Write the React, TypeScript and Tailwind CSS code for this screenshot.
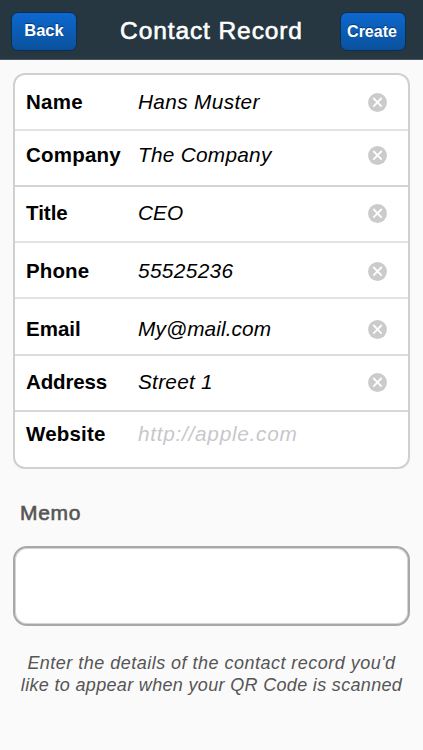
import { useState } from "react";

interface Field {
   label: string;
   value: string;
   placeholder?: string;
   row: string;
   labelStyle: string;
   valueStyle: string;
}

const initialFields: Field[] = [
   { label: "Name", value: "Hans Muster", row: "h-14 pt-[15px] border-[#e2e2e2]", labelStyle: "tracking-[0.3px]", valueStyle: "tracking-[0.35px]" },
   { label: "Company", value: "The Company", row: "h-14 pt-3 border-[#d4d4d4]", labelStyle: "tracking-[0.2px]", valueStyle: "tracking-[0.27px]" },
   { label: "Title", value: "CEO", row: "h-14 pt-[14px] border-[#e2e2e2]", labelStyle: "", valueStyle: "" },
   { label: "Phone", value: "55525236", row: "h-14 pt-4 border-[#e2e2e2]", labelStyle: "tracking-[0.1px]", valueStyle: "tracking-[0.37px]" },
   { label: "Email", value: "My@mail.com", row: "h-[57px] pt-[18px] border-[#dcdcdc]", labelStyle: "", valueStyle: "tracking-[0.1px]" },
   { label: "Address", value: "Street 1", row: "h-14 pt-[14px] border-[#d8d8d8]", labelStyle: "tracking-[-0.15px]", valueStyle: "tracking-[0.25px]" },
   { label: "Website", value: "", placeholder: "http://apple.com", row: "h-[54px] pt-[10px] border-transparent", labelStyle: "tracking-[0.2px]", valueStyle: "tracking-[0.72px]" },
];

function ClearIcon() {
   return (
      <svg width="19" height="19" viewBox="0 0 19 19" className="block">
         <circle cx="9.5" cy="9.5" r="9.4" fill="#cbcbcb" />
         <path d="M5.3 5 L13.7 13.6 M13.7 5 L5.3 13.6" stroke="#fff" strokeWidth="1.8" />
      </svg>
   );
}

function HeaderButton({ children, className }: { children: string; className: string }) {
   return (
      <button className={`h-[39px] w-[66px] shrink-0 rounded-[7px] border border-[#0b2e55] bg-linear-to-b from-[#0d68cf] to-[#0a519c] leading-none font-bold text-white [text-shadow:0_-1px_1px_#073a75] ${className}`}>
         {children}
      </button>
   );
}

export default function App() {
   const [fields, setFields] = useState(initialFields);

   const clearField = (label: string) => {
      setFields((current) => current.map((field) => (field.label === label ? { ...field, value: "" } : field)));
   };

   return (
      <div className="h-[750px] w-[423px] overflow-hidden bg-[#fafafa] font-['Liberation_Sans',Arial,sans-serif]">
         <header className="flex h-[60px] items-start justify-between border-b border-[#4a5860] bg-[#263741] pt-3 pr-[17px] pl-[11px]">
            <HeaderButton className="pb-[2px] text-[16.5px]">Back</HeaderButton>
            <h1 className="mt-[4px] ml-[6px] text-[24.5px] leading-[30px] tracking-[0.9px] whitespace-nowrap text-white [-webkit-text-stroke:0.6px_#fff]">Contact Record</h1>
            <HeaderButton className="pt-px pr-[2px] text-[16px]">Create</HeaderButton>
         </header>

         <main>
            <section className="mx-[13px] mt-[13px] h-[396px] w-[397px] rounded-[12px] border-2 border-[#d0d0d0] bg-white">
               {fields.map((field) => (
                  <div key={field.label} className={`flex items-start border-b-2 pl-[11px] ${field.row}`}>
                     <span className={`w-28 shrink-0 text-[20.5px] leading-6 font-bold text-black ${field.labelStyle}`}>{field.label}</span>
                     <span className={`grow text-[20.8px] leading-6 italic whitespace-nowrap ${field.value ? "text-black" : "text-[#c7c7cc]"} ${field.valueStyle}`}>
                        {field.value || field.placeholder}
                     </span>
                     {field.value && (
                        <button className="mt-[3px] mr-[21px]" onClick={() => clearField(field.label)} aria-label="Clear">
                           <ClearIcon />
                        </button>
                     )}
                  </div>
               ))}
            </section>

            <h2 className="mt-8 ml-5 text-[21px] leading-6 tracking-[0.7px] text-[#555] [-webkit-text-stroke:0.6px_#555]">Memo</h2>
            <div className="mx-[13px] mt-[21px] h-20 w-[397px] rounded-[14px] border-2 border-[#a8a8a8] bg-white shadow-[inset_0_0_0_1px_#d4d4d4]" />

            <p className="mt-[26px] text-center text-[18px] leading-[22px] whitespace-nowrap text-[#555] italic">
               <span className="block tracking-[0.48px]">Enter the details of the contact record you'd</span>
               <span className="block tracking-[0.33px]">like to appear when your QR Code is scanned</span>
            </p>
         </main>
      </div>
   );
}
